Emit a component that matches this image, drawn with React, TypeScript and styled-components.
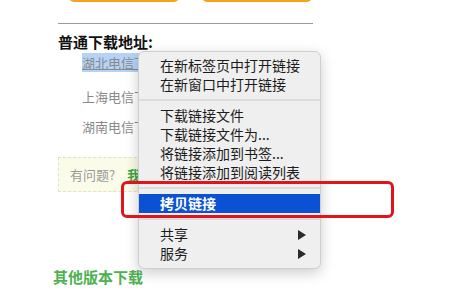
import styled, { createGlobalStyle } from 'styled-components';

const GlobalStyle = createGlobalStyle`
  html, body {
    margin: 0;
    padding: 0;
    background: #ffffff;
  }
  body {
    font-family: "Noto Sans CJK SC", "Noto Sans", "Liberation Sans", sans-serif;
    overflow: hidden;
  }
`;

const Page = styled.div`
  position: relative;
  width: 473px;
  height: 295px;
  overflow: hidden;
`;

const Content = styled.div`
  display: flex;
  flex-direction: column;
  width: 255px;
  margin-left: 58px;
`;

const ButtonRow = styled.div`
  display: flex;
  gap: 23px;
  margin-top: -30px;
  padding-left: 11px;
`;

const OrangeButton = styled.div`
  width: 110px;
  height: 32px;
  border-radius: 5px;
  background: #f7a21b;
`;

const Rule = styled.hr`
  margin: 21px 0 0;
  border: none;
  border-top: 1px solid #9a9a9a;
`;

const Heading = styled.h3`
  margin: 8px 0 0;
  font-size: 15px;
  line-height: 20px;
  font-weight: 700;
  color: #111;
`;

const LinkList = styled.ul`
  list-style: none;
  margin: 2px 0 0;
  padding: 0 0 0 24px;
  display: flex;
  flex-direction: column;
`;

const LinkItem = styled.li<{ $h: number }>`
  height: ${(p) => p.$h}px;
  font-size: 13px;
  line-height: 18px;
`;

const DlLink = styled.a<{ $selected?: boolean }>`
  color: #8a8a8a;
  text-decoration: ${(p) => (p.$selected ? 'underline' : 'none')};
  background: ${(p) => (p.$selected ? '#b4d3f7' : 'transparent')};
`;

const QuestionBox = styled.div`
  margin-top: 9px;
  height: 35px;
  box-sizing: border-box;
  border: 1px dashed #dfe6b8;
  background: #fbfbea;
  padding: 0 0 0 11px;
  display: flex;
  align-items: center;
  font-size: 13px;
  color: #999;
  gap: 12px;
`;

const GreenStrong = styled.span`
  color: #3aa63f;
  font-weight: 700;
`;

const OtherVersions = styled.h3`
  margin: 75px 0 0 -5px;
  font-size: 15px;
  line-height: 20px;
  font-weight: 700;
  color: #4bb24f;
`;

const Menu = styled.div`
  position: absolute;
  left: 138px;
  top: 51px;
  width: 183px;
  box-sizing: border-box;
  padding: 4px 0 5px;
  background: #efefef;
  border: 1px solid #cfcfcf;
  border-radius: 6px;
  box-shadow: 0 4px 14px rgba(0, 0, 0, 0.2);
  font-size: 14px;
  color: #1c1c1c;
`;

const MenuItem = styled.div<{ $active?: boolean }>`
  display: flex;
  align-items: center;
  justify-content: space-between;
  height: 19px;
  padding: 0 14px 0 21px;
  line-height: 19px;
  background: ${(p) => (p.$active ? '#0b51d3' : 'transparent')};
  color: ${(p) => (p.$active ? '#ffffff' : '#1c1c1c')};
  font-weight: ${(p) => (p.$active ? 600 : 400)};
`;

const Separator = styled.div`
  height: 12px;
  display: flex;
  align-items: center;
  &::after {
    content: '';
    flex: 1;
    height: 2px;
    background: #dcdcdc;
  }
`;

const Arrow = styled.span`
  width: 0;
  height: 0;
  border-top: 5px solid transparent;
  border-bottom: 5px solid transparent;
  border-left: 8px solid #2a2a2a;
`;

const Annotation = styled.div`
  position: absolute;
  left: 121px;
  top: 181px;
  width: 273px;
  height: 37px;
  box-sizing: border-box;
  border: 3px solid #e3131b;
  border-radius: 6px;
`;

const links = ['湖北电信下载', '上海电信下载', '湖南电信下载'];

export default function App() {
  return (
    <Page>
      <GlobalStyle />
      <Content>
        <ButtonRow>
          <OrangeButton />
          <OrangeButton />
        </ButtonRow>
        <Rule />
        <Heading>普通下载地址:</Heading>
        <LinkList>
          {links.map((l, i) => (
            <LinkItem key={l} $h={i === 0 ? 34 : 30}>
              <DlLink $selected={i === 0}>{l}</DlLink>
            </LinkItem>
          ))}
        </LinkList>
        <QuestionBox>
          有问题?<GreenStrong>我要反馈</GreenStrong>
        </QuestionBox>
        <OtherVersions>其他版本下载</OtherVersions>
      </Content>

      <Menu>
        <MenuItem>在新标签页中打开链接</MenuItem>
        <MenuItem>在新窗口中打开链接</MenuItem>
        <Separator />
        <MenuItem>下载链接文件</MenuItem>
        <MenuItem>下载链接文件为...</MenuItem>
        <MenuItem>将链接添加到书签...</MenuItem>
        <MenuItem>将链接添加到阅读列表</MenuItem>
        <Separator />
        <MenuItem $active>拷贝链接</MenuItem>
        <Separator />
        <MenuItem>
          共享<Arrow />
        </MenuItem>
        <MenuItem>
          服务<Arrow />
        </MenuItem>
      </Menu>
      <Annotation />
    </Page>
  );
}
